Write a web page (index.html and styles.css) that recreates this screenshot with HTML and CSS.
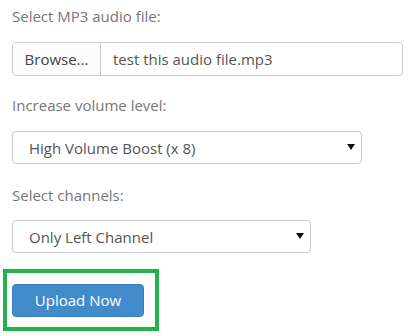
FILE: index.html
```html
<!DOCTYPE html>
<html>
<head>
<meta charset="utf-8">
<link rel="stylesheet" href="styles.css">
</head>
<body>
<form class="form">
  <div class="label label-first">Select MP3 audio file:</div>
  <div class="file-input">
    <span class="browse">Browse...</span>
    <span class="file-name">test this audio file.mp3</span>
  </div>

  <div class="label">Increase volume level:</div>
  <div class="select select-wide">
    <span class="select-text">High Volume Boost (x 8)</span>
    <svg class="arrow" width="8" height="6" viewBox="0 0 8 6"><path d="M0 0H8L4 6Z" fill="#111"/></svg>
  </div>

  <div class="label">Select channels:</div>
  <div class="select select-narrow">
    <span class="select-text">Only Left Channel</span>
    <svg class="arrow" width="8" height="6" viewBox="0 0 8 6"><path d="M0 0H8L4 6Z" fill="#111"/></svg>
  </div>

  <div class="highlight">
    <button type="button" class="btn-primary">Upload Now</button>
  </div>
</form>
</body>
</html>
```

FILE: styles.css
```css
html, body {
  margin: 0;
  padding: 0;
  background: #ffffff;
}

body {
  font-family: "Open Sans", "Liberation Sans", sans-serif;
  font-size: 15px;
  width: 416px;
  height: 336px;
  overflow: hidden;
}

.form {
  padding: 6px 0 0 12px;
  display: flex;
  flex-direction: column;
  align-items: flex-start;
}

.label {
  color: #777777;
  line-height: 20px;
  height: 20px;
  margin-top: 19px;
  margin-bottom: 16px;
}

.label-first {
  margin-top: 0;
}

.file-input {
  box-sizing: border-box;
  width: 391px;
  height: 34px;
  border: 1px solid #cccccc;
  border-radius: 4px;
  display: flex;
  align-items: stretch;
  color: #555555;
  overflow: hidden;
}

.browse {
  width: 87px;
  border-right: 1px solid #cccccc;
  background: #fcfcfc;
  display: flex;
  align-items: center;
  justify-content: center;
  color: #444444;
}

.file-name {
  display: flex;
  align-items: center;
  padding-left: 12px;
  color: #555555;
}

.select {
  box-sizing: border-box;
  height: 33px;
  border: 1px solid #cccccc;
  border-radius: 4px;
  display: flex;
  align-items: center;
  justify-content: space-between;
  padding: 0 6px 0 16px;
  color: #555555;
}

.select-wide {
  width: 350px;
}

.select-narrow {
  width: 299px;
}

.select + .label {
  margin-top: 21px;
  margin-bottom: 15px;
}

.arrow {
  display: block;
  margin-top: -2px;
}

.highlight {
  margin: 16px 0 0 -9px;
  border: 4px solid #22b14c;
  padding: 11px 11px 10px 5px;
  background: #ffffff;
}

.btn-primary {
  display: block;
  box-sizing: border-box;
  width: 132px;
  height: 33px;
  margin: 0;
  border: 1px solid #3a80c0;
  border-radius: 4px;
  background: #428bca;
  color: #ffffff;
  font-family: "Open Sans", "Liberation Sans", sans-serif;
  font-size: 15px;
  padding: 0;
  line-height: 31px;
}
```
